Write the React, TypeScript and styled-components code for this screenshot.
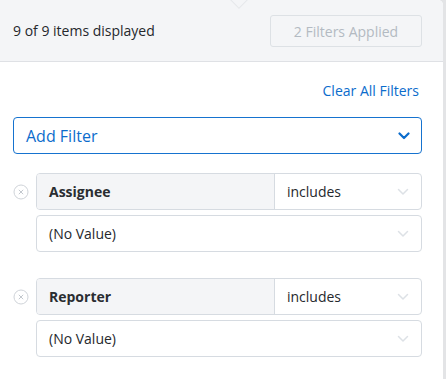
import React from 'react'
import styled, { createGlobalStyle } from 'styled-components'

const GlobalStyle = createGlobalStyle`
  html, body {
    margin: 0;
    padding: 0;
    background: #e3e4e6;
  }
  body {
    font-family: "Open Sans", "Noto Sans", sans-serif;
  }
`

const Panel = styled.div`
  width: 443px;
  height: 379px;
  background: #ffffff;
  border-top-right-radius: 5px;
  overflow: hidden;
  box-sizing: border-box;
`

const Header = styled.div`
  position: relative;
  height: 62px;
  background: #f4f5f7;
  border-bottom: 1px solid #dfe1e5;
  box-sizing: border-box;
  display: flex;
  align-items: center;
  justify-content: space-between;
  padding: 0 21px 0 13px;
`

const Caret = styled.div`
  position: absolute;
  top: -8px;
  left: 232px;
  width: 12px;
  height: 12px;
  background: #f4f5f7;
  border: 1px solid #e6e8eb;
  transform: rotate(45deg);
`

const Count = styled.div`
  font-size: 14px;
  color: #25282c;
`

const AppliedButton = styled.button`
  width: 152px;
  height: 32px;
  margin-top: 1px;
  background: transparent;
  border: 1px solid #dde1e5;
  border-radius: 3px;
  font-family: "Open Sans", "Noto Sans", sans-serif;
  font-size: 14px;
  color: #b3bac2;
  padding: 0;
`

const Body = styled.div`
  padding: 16px 21px 0 13px;
  display: flex;
  flex-direction: column;
`

const ClearLink = styled.a`
  align-self: flex-end;
  font-size: 14px;
  color: #0b6ccc;
  line-height: 20px;
  margin-top: 3px;
  margin-right: 3px;
  text-decoration: none;
`

const AddFilterSelect = styled.div`
  margin-top: 16px;
  height: 37px;
  border: 1px solid #1673cf;
  border-radius: 4px;
  box-sizing: border-box;
  display: flex;
  align-items: center;
  justify-content: space-between;
  padding: 0 11px 0 12px;
  font-size: 16px;
  color: #0b6ccc;
`

const FilterList = styled.div`
  margin-top: 19px;
  display: flex;
  flex-direction: column;
  gap: 26px;
`

const FilterRow = styled.div`
  display: flex;
  align-items: flex-start;
`

const RemoveSlot = styled.div`
  width: 23px;
  height: 37px;
  display: flex;
  align-items: center;
`

const Fields = styled.div`
  flex: 1;
  display: flex;
  flex-direction: column;
  gap: 5px;
`

const Box = styled.div`
  height: 37px;
  border: 1px solid #d6dbe1;
  border-radius: 4px;
  box-sizing: border-box;
  display: flex;
  align-items: stretch;
  overflow: hidden;
  font-size: 14px;
  color: #25282c;
`

const FieldName = styled.div`
  width: 238px;
  box-sizing: border-box;
  flex-shrink: 0;
  background: #f4f5f7;
  border-right: 1px solid #d6dbe1;
  display: flex;
  align-items: center;
  padding-left: 12px;
  font-weight: 700;
  color: #2a2d31;
`

const Cell = styled.div`
  flex: 1;
  display: flex;
  align-items: center;
  justify-content: space-between;
  padding: 0 12px 0 12px;
`

function Chevron({ color, weight }: { color: string; weight: number }) {
  return (
    <svg width="12" height="8" viewBox="0 0 12 8" fill="none">
      <path d="M1.5 1.5 L6 6 L10.5 1.5" stroke={color} strokeWidth={weight} strokeLinecap="round" strokeLinejoin="round" />
    </svg>
  )
}

function RemoveIcon() {
  return (
    <svg width="16" height="16" viewBox="0 0 16 16" fill="none">
      <circle cx="8" cy="8" r="7" stroke="#cfd3d8" strokeWidth="1" />
      <path d="M5.8 5.8 L10.2 10.2 M10.2 5.8 L5.8 10.2" stroke="#c3c8ce" strokeWidth="1" />
    </svg>
  )
}

const filters = [
  { name: 'Assignee', op: 'includes', value: '(No Value)' },
  { name: 'Reporter', op: 'includes', value: '(No Value)' },
]

export default function App() {
  return (
    <>
      <GlobalStyle />
      <Panel>
        <Header>
          <Caret />
          <Count>9 of 9 items displayed</Count>
          <AppliedButton disabled>2 Filters Applied</AppliedButton>
        </Header>
        <Body>
          <ClearLink>Clear All Filters</ClearLink>
          <AddFilterSelect>
            <span>Add Filter</span>
            <Chevron color="#0b6ccc" weight={2.2} />
          </AddFilterSelect>
          <FilterList>
            {filters.map((f) => (
              <FilterRow key={f.name}>
                <RemoveSlot>
                  <RemoveIcon />
                </RemoveSlot>
                <Fields>
                  <Box>
                    <FieldName>{f.name}</FieldName>
                    <Cell>
                      <span>{f.op}</span>
                      <Chevron color="#dde1e6" weight={1.5} />
                    </Cell>
                  </Box>
                  <Box>
                    <Cell>
                      <span>{f.value}</span>
                      <Chevron color="#dde1e6" weight={1.5} />
                    </Cell>
                  </Box>
                </Fields>
              </FilterRow>
            ))}
          </FilterList>
        </Body>
      </Panel>
    </>
  )
}
